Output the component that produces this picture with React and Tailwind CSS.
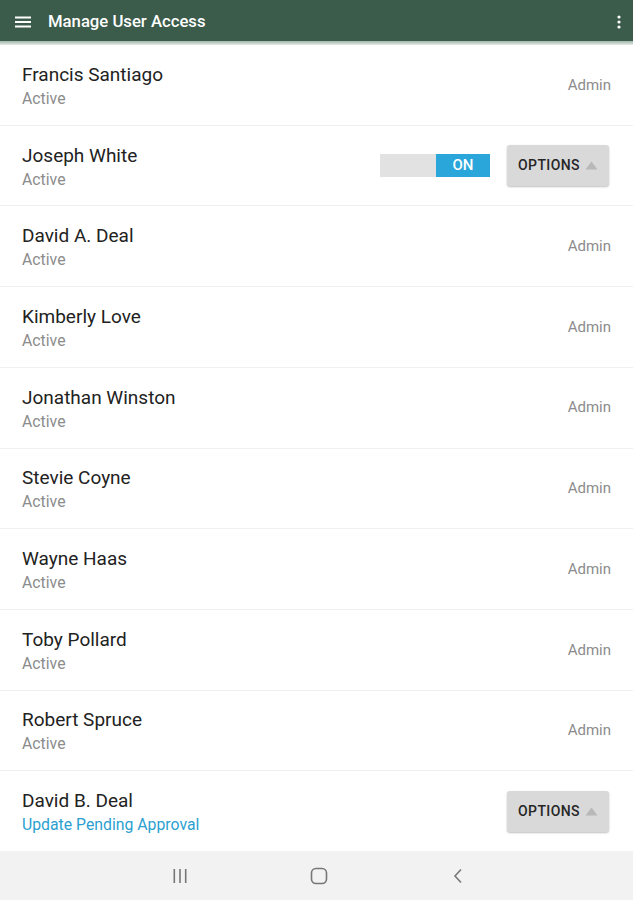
import React from "react";

const users = [
  { name: "Francis Santiago", status: "Active", role: "Admin" },
  { name: "Joseph White", status: "Active", expanded: true },
  { name: "David A. Deal", status: "Active", role: "Admin" },
  { name: "Kimberly Love", status: "Active", role: "Admin" },
  { name: "Jonathan Winston", status: "Active", role: "Admin" },
  { name: "Stevie Coyne", status: "Active", role: "Admin" },
  { name: "Wayne Haas", status: "Active", role: "Admin" },
  { name: "Toby Pollard", status: "Active", role: "Admin" },
  { name: "Robert Spruce", status: "Active", role: "Admin" },
  { name: "David B. Deal", status: "Update Pending Approval", pending: true },
];

const OptionsButton = () => (
  <button className="flex h-[41px] w-[102px] items-center justify-center gap-[5px] rounded-[3px] bg-[#d9d9d9] text-[14px] font-medium tracking-[0.4px] text-[#262626] shadow-[0_1px_2px_rgba(0,0,0,0.25)]">
    OPTIONS
    <svg width="13" height="9" viewBox="0 0 13 9">
      <path d="M6.5 0.5 L12.5 8.5 L0.5 8.5 Z" fill="#b8b8b8" />
    </svg>
  </button>
);

const Row = ({ user }) => (
  <div className="flex flex-1 items-center border-b border-[#f0f0f0] px-[22px] last:border-b-0">
    <div className="flex flex-1 flex-col pt-[3px]">
      <span className="text-[19px] leading-[24px] text-[#222]">{user.name}</span>
      <span
        className={
          user.pending
            ? "mt-[1px] text-[15.8px] leading-[22px] text-[#2b9fd0]"
            : "mt-[1px] text-[15.8px] leading-[22px] text-[#8c8c8c]"
        }
      >
        {user.status}
      </span>
    </div>
    {user.role && <span className="text-[15px] text-[#8c8c8c]">{user.role}</span>}
    {user.expanded && (
      <div className="mr-[2px] flex items-center gap-[17px]">
        <div className="flex h-[23px] w-[110px]">
          <div className="w-[56px] bg-[#e2e2e2]" />
          <div className="flex flex-1 items-center justify-center bg-[#2aa6da] text-[15px] font-medium text-white">
            ON
          </div>
        </div>
        <OptionsButton />
      </div>
    )}
    {user.pending && (
      <div className="mr-[2px]">
        <OptionsButton />
      </div>
    )}
  </div>
);

export default function App() {
  return (
    <div className="flex h-[900px] w-[633px] flex-col bg-white font-['Roboto',sans-serif]">
      <header className="flex h-[41px] shrink-0 items-center bg-[#3b5b4b] pl-[15px] pr-[12px] pt-[2px] text-white">
        <svg width="16" height="12" viewBox="0 0 16 12">
          <rect x="0" y="0.5" width="16" height="2" fill="white" />
          <rect x="0" y="5" width="16" height="2" fill="white" />
          <rect x="0" y="9.5" width="16" height="2" fill="white" />
        </svg>
        <span className="ml-[17px] flex-1 text-[16.7px] font-medium">Manage User Access</span>
        <svg width="4" height="14" viewBox="0 0 4 14">
          <circle cx="2" cy="2" r="1.6" fill="white" />
          <circle cx="2" cy="7" r="1.6" fill="white" />
          <circle cx="2" cy="12" r="1.6" fill="white" />
        </svg>
      </header>
      <div className="h-[4px] shrink-0 bg-gradient-to-b from-[#9fb6a9] to-[#e6ebe8]" />
      <div className="flex flex-1 flex-col">
        {users.map((u) => (
          <Row key={u.name} user={u} />
        ))}
      </div>
      <nav className="flex h-[49px] shrink-0 items-center justify-center gap-[119px] bg-[#f2f2f2] pl-[5px]">
        <div className="flex w-[20px] justify-center">
          <svg width="16" height="16" viewBox="0 0 16 16">
            <rect x="1.5" y="1" width="1.6" height="14" fill="#777" />
            <rect x="7.2" y="1" width="1.6" height="14" fill="#777" />
            <rect x="12.9" y="1" width="1.6" height="14" fill="#777" />
          </svg>
        </div>
        <div className="flex w-[20px] justify-center">
          <svg width="18" height="18" viewBox="0 0 18 18">
            <rect x="1.5" y="1.5" width="15" height="15" rx="4.5" fill="none" stroke="#777" strokeWidth="1.6" />
          </svg>
        </div>
        <div className="flex w-[20px] justify-center">
          <svg width="12" height="16" viewBox="0 0 12 16">
            <path d="M9 1.5 L3 8 L9 14.5" fill="none" stroke="#777" strokeWidth="1.6" />
          </svg>
        </div>
      </nav>
    </div>
  );
}
